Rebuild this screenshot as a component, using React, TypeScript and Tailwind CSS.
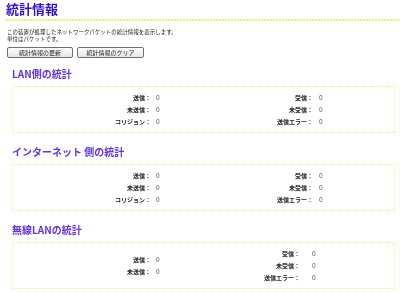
import React from "react";

type Row = { label: string; value: string };

const jp = "font-['Noto_Sans_CJK_JP','Noto_Sans',sans-serif]";

function StatCol({ rows, labelW, gap }: { rows: Row[]; labelW: string; gap: string }) {
  return (
    <div className={`grid ${labelW} ${gap} auto-rows-[12px] items-center`}>
      {rows.map((r) => (
        <React.Fragment key={r.label}>
          <span className="text-right font-bold text-[#222]">{r.label}</span>
          <span className="font-['Liberation_Sans',sans-serif] text-[6.5px] text-[#555]">{r.value}</span>
        </React.Fragment>
      ))}
    </div>
  );
}

function Section({
  title,
  left,
  right,
  rightLabelW,
  rightGap,
}: {
  title: string;
  left: Row[];
  right: Row[];
  rightLabelW: string;
  rightGap: string;
}) {
  return (
    <>
      <h2 className="pl-[12px] text-[10px] font-bold leading-[12px] text-[#6236e0]">{title}</h2>
      <div className="ml-[12px] mt-[6px] flex h-[47px] w-[383px] items-center border border-dotted border-[#f0f08a] text-[6px] leading-[12px]">
        <div className="w-[204px]">
          <StatCol rows={left} labelW="grid-cols-[138px_auto]" gap="gap-x-[5px]" />
        </div>
        <StatCol rows={right} labelW={rightLabelW} gap={rightGap} />
      </div>
    </>
  );
}

export default function App() {
  const send = { label: "送信：", value: "0" };
  const unsent = { label: "未送信：", value: "0" };
  const coll = { label: "コリジョン：", value: "0" };
  const recv = { label: "受信：", value: "0" };
  const unrecv = { label: "未受信：", value: "0" };
  const err = { label: "送信エラー：", value: "0" };

  return (
    <div className={`h-[293px] w-[400px] overflow-hidden bg-white will-change-transform ${jp}`}>
      <h1 className="mt-[2px] pl-[6px] text-[13px] font-bold leading-[14px] text-[#3311cc]">統計情報</h1>
      <div className="ml-[6px] mt-[3px] h-[2px] bg-[repeating-linear-gradient(90deg,#f0f07a_0_2px,transparent_2px_3px)]" />

      <p className="mt-[8px] pl-[7px] text-[5.5px] leading-[7px] text-[#222]">
        この装置が処理したネットワークパケットの統計情報を表示します。
        <br />
        単位はパケットです。
      </p>

      <div className="mt-[4px] flex gap-[4px] pl-[7px]">
        <button className="h-[11px] w-[66px] rounded-[2px] border border-[#707070] bg-[linear-gradient(#fdfdfd,#e6e6e6)] text-[6px] leading-[9px] text-[#222]">
          統計情報の更新
        </button>
        <button className="h-[11px] w-[67px] rounded-[2px] border border-[#707070] bg-[linear-gradient(#fdfdfd,#e6e6e6)] text-[6px] leading-[9px] text-[#222]">
          統計情報のクリア
        </button>
      </div>

      <div className="mt-[10px]">
        <Section
          title="LAN側の統計"
          left={[send, unsent, coll]}
          right={[recv, unrecv, err]}
          rightLabelW="grid-cols-[96px_auto]"
          rightGap="gap-x-[6px]"
        />
      </div>
      <div className="mt-[13px]">
        <Section
          title="インターネット 側の統計"
          left={[send, unsent, coll]}
          right={[recv, unrecv, err]}
          rightLabelW="grid-cols-[96px_auto]"
          rightGap="gap-x-[6px]"
        />
      </div>
      <div className="mt-[13px]">
        <Section
          title="無線LANの統計"
          left={[send, unsent]}
          right={[recv, unrecv, err]}
          rightLabelW="grid-cols-[83px_auto]"
          rightGap="gap-x-[12px]"
        />
      </div>
    </div>
  );
}
